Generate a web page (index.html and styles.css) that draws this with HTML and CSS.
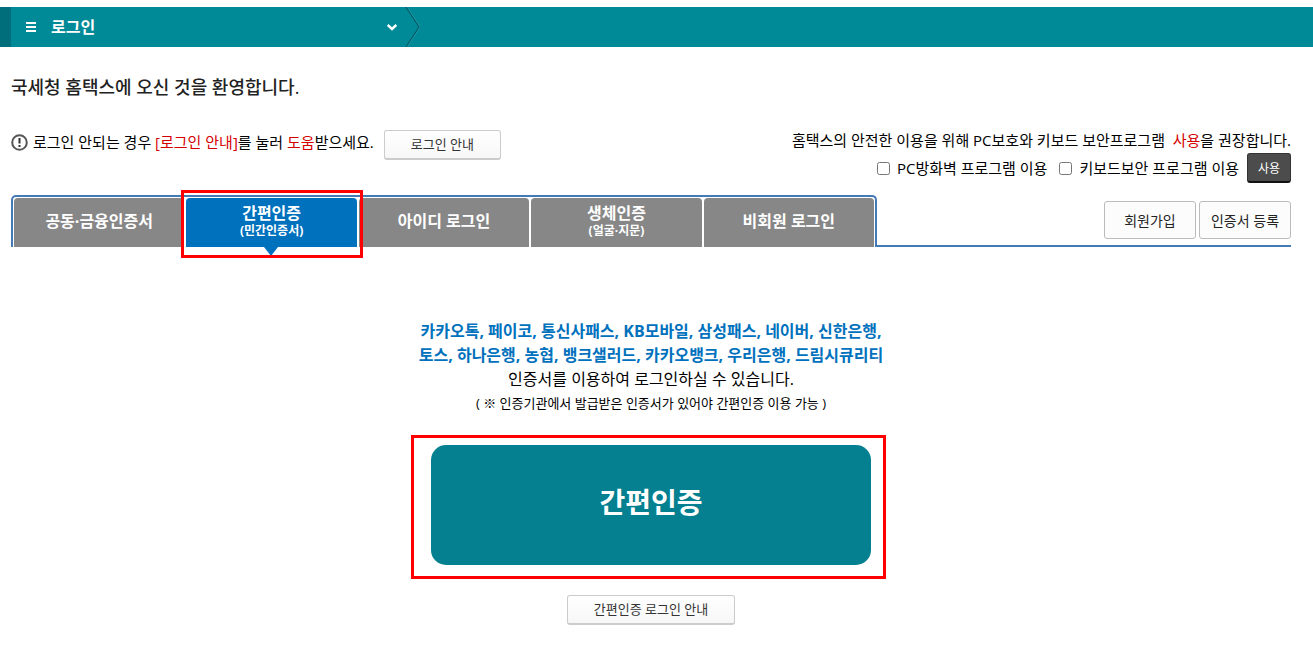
FILE: index.html
```html
<!DOCTYPE html>
<html lang="ko">
<head>
  <meta charset="UTF-8">
  <meta name="viewport" content="width=device-width, initial-scale=1.0">
  <title>로그인</title>
  <link rel="stylesheet" href="styles.css">
</head>
<body>
  <header class="top-bar">
    <button type="button" class="top-menu">
      <svg class="icon-menu" width="10" height="10" viewBox="0 0 10 10"><path d="M0 1h10M0 5h10M0 9h10" stroke="#fff" stroke-width="2"/></svg>
      <span class="top-title">로그인</span>
      <svg width="10" height="7" viewBox="0 0 10 7"><path d="M.7 1l4.3 4 4.3-4" fill="none" stroke="#fff" stroke-width="2.4"/></svg>
    </button>
    <svg class="top-divider" width="16" height="40" viewBox="0 0 16 40"><path d="M2 0l13 20-13 20" fill="none" stroke="#3ba3ae" stroke-opacity=".6"/><path d="M1 0l13 20-13 20" fill="none" stroke="#00505a"/></svg>
  </header>

  <main class="container">
    <h1>국세청 홈택스에 오신 것을 환영합니다.</h1>

    <div class="info">
      <div class="info-left">
        <svg width="17" height="17" viewBox="0 0 17 17"><circle cx="8.5" cy="8.5" r="7.3" fill="none" stroke="#555" stroke-width="2"/><path d="M8.5 4v5.4M8.5 11v2" stroke="#333" stroke-width="2"/></svg>
        <p>로그인 안되는 경우 <span class="red">[로그인 안내]</span>를 눌러 <span class="red">도움</span>받으세요.</p>
        <button type="button" class="btn">로그인 안내</button>
      </div>
      <div class="info-right">
        <p>홈택스의 안전한 이용을 위해 PC보호와 키보드 보안프로그램 &nbsp;<span class="red">사용</span>을 권장합니다.</p>
        <div class="security">
          <input type="checkbox" id="firewall">
          <label for="firewall">PC방화벽 프로그램 이용</label>
          <input type="checkbox" id="keyboard">
          <label for="keyboard">키보드보안 프로그램 이용</label>
          <button type="button" class="btn-use">사용</button>
        </div>
      </div>
    </div>

    <div class="tab-row">
      <nav class="tabs">
        <a href="#">공동·금융인증서</a>
        <a href="#" class="active">간편인증<small>(민간인증서)</small></a>
        <a href="#">아이디 로그인</a>
        <a href="#">생체인증<small>(얼굴·지문)</small></a>
        <a href="#">비회원 로그인</a>
      </nav>
      <div class="tab-side">
        <button type="button">회원가입</button>
        <button type="button">인증서 등록</button>
      </div>
    </div>

    <section class="login">
      <p class="providers">카카오톡, 페이코, 통신사패스, KB모바일, 삼성패스, 네이버, 신한은행,<br>토스, 하나은행, 농협, 뱅크샐러드, 카카오뱅크, 우리은행, 드림시큐리티</p>
      <p>인증서를 이용하여 로그인하실 수 있습니다.</p>
      <p class="note">( ※ 인증기관에서 발급받은 인증서가 있어야 간편인증 이용 가능 )</p>
      <div class="login-main">
        <button type="button" class="btn-login">간편인증</button>
      </div>
      <button type="button" class="btn">간편인증 로그인 안내</button>
    </section>
  </main>
</body>
</html>
```
FILE: styles.css
```css
* {
  box-sizing: border-box;
}

body {
  margin: 0;
  padding-top: 7px;
  font-family: "Open Sans", "Noto Sans CJK KR", sans-serif;
  font-size: 15px;
  line-height: 24px;
  color: #000;
  background-color: #fff;
}

h1,
p {
  margin: 0;
}

button {
  font-family: inherit;
  cursor: pointer;
}

.red {
  color: #d40000;
}

/* 상단 바 */
.top-bar {
  display: flex;
  height: 40px;
  background-color: #008997;
  border-left: 11px solid #006f7b;
}

.top-menu {
  display: flex;
  align-items: center;
  width: 394px;
  padding: 0 8px 0 15px;
  border: none;
  background: none;
  color: #fff;
  font-size: 16px;
  font-weight: bold;
}

.top-title {
  flex: 1;
  padding: 0 0 2px 15px;
  text-align: left;
}

.container {
  margin: 0 22px 0 11px;
}

h1 {
  padding-top: 28px;
  font-size: 18px;
  font-weight: 500;
  color: #222;
}

/* 안내 문구 */
.info {
  display: flex;
  justify-content: space-between;
  margin-top: 29px;
}

.info-left {
  display: flex;
  align-items: center;
  align-self: flex-start;
  gap: 5px;
  margin-top: 2px;
  height: 30px;
}

.info-left p {
  padding-bottom: 6px;
}

.info-left svg {
  margin-bottom: 6px;
}

.info-left .btn {
  margin-left: 5px;
}

.info-right {
  text-align: right;
}

.security {
  display: flex;
  align-items: center;
  justify-content: flex-end;
  height: 32px;
}

.security input {
  width: 13px;
  height: 13px;
  margin: 0 7px 0 12px;
}

.btn {
  height: 30px;
  padding: 0 26px 2px;
  border: 1px solid #ccc;
  border-bottom-width: 2px;
  border-radius: 3px;
  background: linear-gradient(#fff, #f7f7f7);
  color: #333;
  font-size: 13px;
}

.btn-use {
  width: 44px;
  height: 30px;
  margin-left: 8px;
  padding: 0;
  border: 1px solid #333;
  border-bottom: 2px solid #111;
  border-radius: 3px;
  background-color: #4c4c4c;
  color: #fff;
  font-size: 12px;
}

/* 탭 메뉴 */
.tab-row {
  display: flex;
  margin-top: 11px;
}

.tabs {
  display: flex;
  gap: 2px;
  width: 866px;
  height: 52px;
  padding: 1px 1px 0;
  border: 2px solid #447ab5;
  border-bottom: none;
  border-radius: 5px 5px 0 0;
}

.tabs a {
  position: relative;
  display: flex;
  flex: 1;
  flex-direction: column;
  align-items: center;
  justify-content: center;
  padding-bottom: 4px;
  border-radius: 4px 4px 0 0;
  background-color: #878787;
  color: #fff;
  font-size: 16px;
  font-weight: bold;
  line-height: 20px;
  text-decoration: none;
}

.tabs small {
  font-size: 12px;
  line-height: 16px;
}

.tabs .active {
  background-color: #0071bd;
}

.tabs .active::before {
  content: "";
  position: absolute;
  top: 100%;
  left: 50%;
  margin-left: -8px;
  border: 7px solid transparent;
  border-top: 9px solid #0071bd;
  border-bottom: none;
}

/* 강조 표시 */
.tabs .active::after,
.login-main::after {
  content: "";
  position: absolute;
  border: 3px solid #f00;
  pointer-events: none;
}

.tabs .active::after {
  z-index: 1;
  inset: -8px -6px -11px -5px;
}

.tab-side {
  display: flex;
  flex: 1;
  justify-content: flex-end;
  gap: 3px;
  padding-top: 6px;
  border-bottom: 2px solid #447ab5;
}

.tab-side button {
  width: 92px;
  height: 38px;
  padding: 0;
  border: 1px solid #bbb;
  border-radius: 3px;
  background-color: #fcfcfc;
  color: #222;
  font-size: 14px;
}

/* 간편인증 */
.login {
  padding-top: 72px;
  text-align: center;
  font-size: 16px;
}

.providers {
  color: #0071bd;
  font-weight: bold;
}

.note {
  font-size: 13px;
}

.login-main {
  position: relative;
  width: 440px;
  margin: 30px auto;
}

.login-main::after {
  inset: -10px -15px -14px -20px;
}

.btn-login {
  display: block;
  width: 100%;
  height: 120px;
  padding-bottom: 10px;
  border: none;
  border-radius: 15px;
  background-color: #048090;
  color: #fff;
  font-size: 28px;
  font-weight: bold;
}
```
